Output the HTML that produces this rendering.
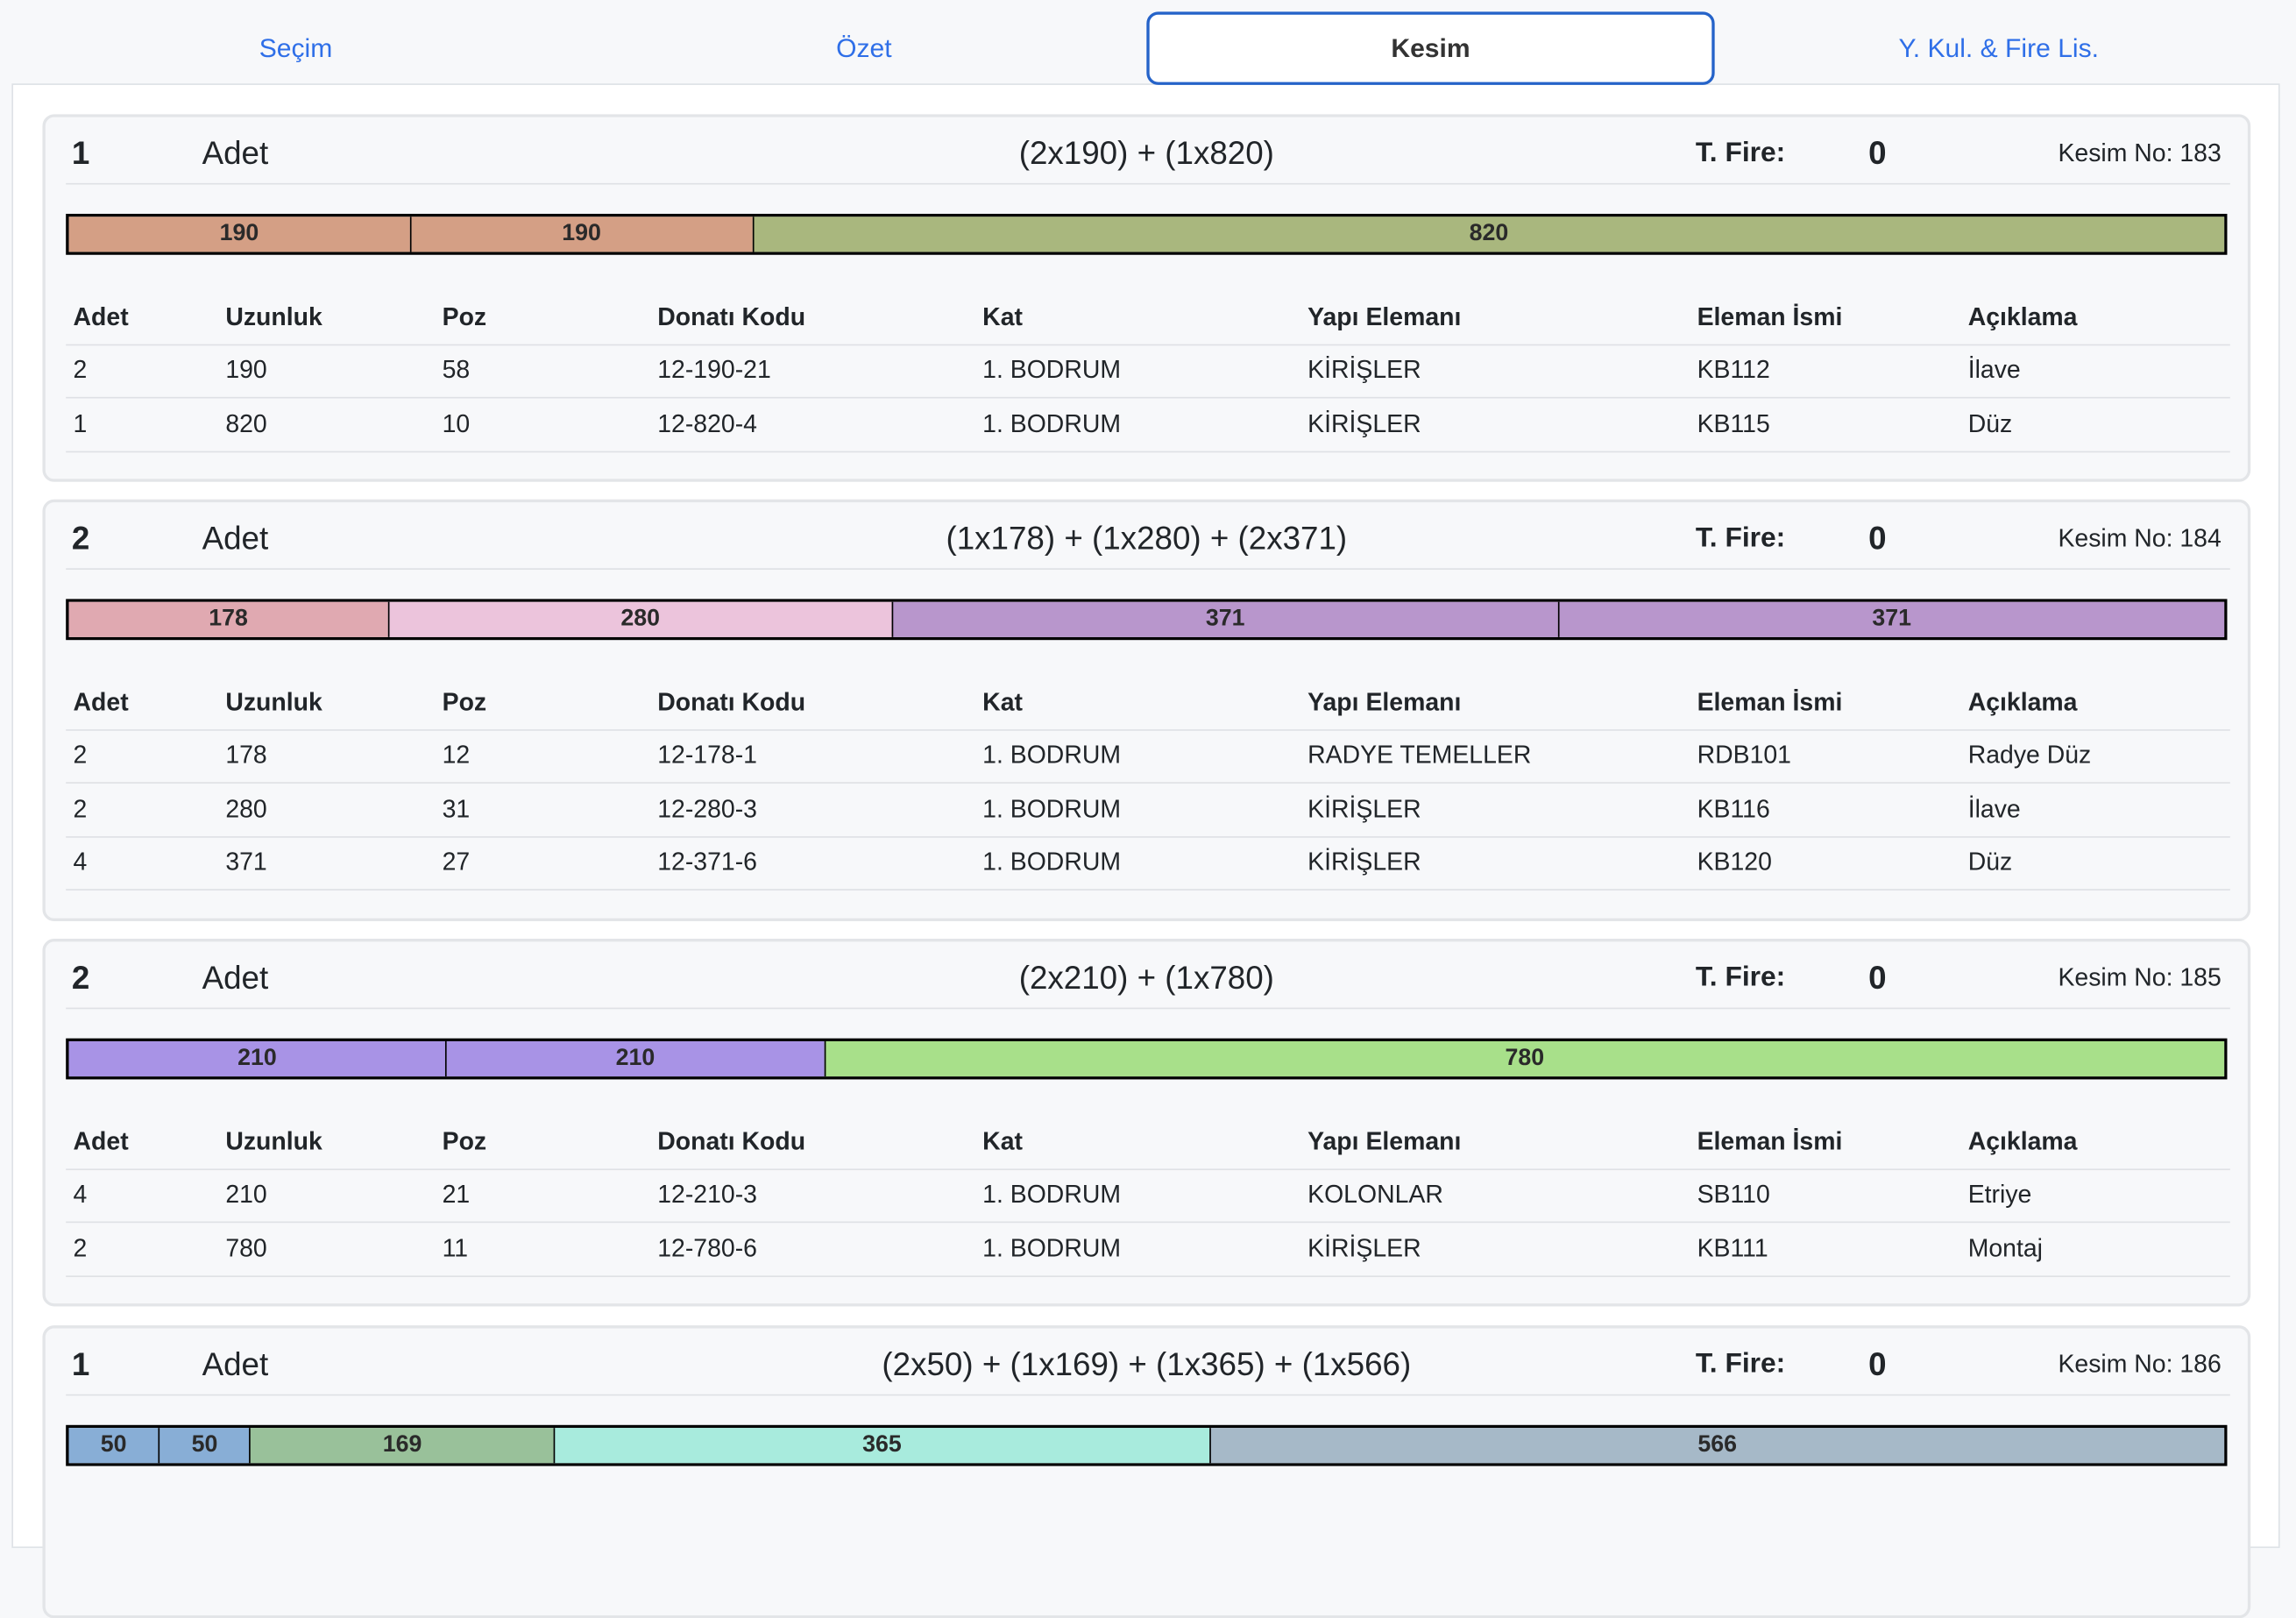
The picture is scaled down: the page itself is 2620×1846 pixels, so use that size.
<!DOCTYPE html>
<html><head><meta charset="utf-8">
<style>
html,body{margin:0;padding:0;background:#f7f8fa;width:2620px;height:1702px;overflow:hidden}
#w{position:absolute;left:0;top:0;width:1568px;height:1019px;transform:scale(1.67092);transform-origin:0 0;font-family:"Liberation Sans",Arial,sans-serif;color:#212529}
.tab{position:absolute;top:8px;height:50px;width:388px;text-align:center;line-height:50px;font-size:18px;color:#2f6fe8}
.tab.act{background:#fff;border:2px solid #2563c9;border-radius:8px;color:#333;font-weight:bold;box-sizing:border-box;line-height:46px}
#panel{position:absolute;left:8px;top:57px;width:1549px;height:1000px;background:#fff;border:1px solid #dee2e6;box-sizing:border-box}
.card{position:absolute;left:29px;width:1508px;background:#f7f8fa;border:2px solid #e3e5e8;border-radius:8px;box-sizing:border-box}
.h{position:absolute;top:12px;font-size:22px;line-height:26px}
.b{font-weight:bold}
.hl{position:absolute;left:14px;width:1478px;top:45px;border-top:1px solid #dfe1e5}
.bar{position:absolute;left:14px;top:66px;width:1476px;height:28px;border:2px solid #000;box-sizing:border-box;display:flex}
.bar div{border-left:1px solid #000;text-align:center;font-weight:bold;font-size:16px;line-height:24px;color:#2a2a2a;overflow:hidden}
.bar div:first-child{border-left:none}
.row{position:absolute;left:14px;width:1478px;height:36px;font-size:17px;line-height:36px;border-bottom:1px solid #dfe1e5}
.row span{position:absolute;top:0}
.th{font-weight:bold}
</style></head><body><div id="w">
<div class="tab" style="left:8px">Seçim</div>
<div class="tab" style="left:396px">Özet</div>
<div id="panel"></div>
<div class="tab act" style="left:783px">Kesim</div>
<div class="tab" style="left:1171px">Y. Kul. &amp; Fire Lis.</div>

<!-- card 1 -->
<div class="card" style="top:78px;height:251px">
 <div class="h b" style="left:18px">1</div>
 <div class="h" style="left:107px">Adet</div>
 <div class="h" style="left:0;width:1504px;text-align:center">(2x190) + (1x820)</div>
 <div class="h b" style="left:1127px;font-size:19px">T. Fire:</div>
 <div class="h b" style="left:1245px">0</div>
 <div class="h" style="right:18px;font-size:17px">Kesim No: 183</div>
 <div class="hl"></div>
 <div class="bar"><div style="flex:190;background:#d49f85">190</div><div style="flex:190;background:#d49f85">190</div><div style="flex:820;background:#a9b77e">820</div></div>
 <div class="row th" style="top:119px"><span style="left:5px">Adet</span><span style="left:109px">Uzunluk</span><span style="left:257px">Poz</span><span style="left:404px">Donatı Kodu</span><span style="left:626px">Kat</span><span style="left:848px">Yapı Elemanı</span><span style="left:1114px">Eleman İsmi</span><span style="left:1299px">Açıklama</span></div>
 <div class="row" style="top:155px"><span style="left:5px">2</span><span style="left:109px">190</span><span style="left:257px">58</span><span style="left:404px">12-190-21</span><span style="left:626px">1. BODRUM</span><span style="left:848px">KİRİŞLER</span><span style="left:1114px">KB112</span><span style="left:1299px">İlave</span></div>
 <div class="row" style="top:192px"><span style="left:5px">1</span><span style="left:109px">820</span><span style="left:257px">10</span><span style="left:404px">12-820-4</span><span style="left:626px">1. BODRUM</span><span style="left:848px">KİRİŞLER</span><span style="left:1114px">KB115</span><span style="left:1299px">Düz</span></div>
</div>

<!-- card 2 -->
<div class="card" style="top:341px;height:288px">
 <div class="h b" style="left:18px">2</div>
 <div class="h" style="left:107px">Adet</div>
 <div class="h" style="left:0;width:1504px;text-align:center">(1x178) + (1x280) + (2x371)</div>
 <div class="h b" style="left:1127px;font-size:19px">T. Fire:</div>
 <div class="h b" style="left:1245px">0</div>
 <div class="h" style="right:18px;font-size:17px">Kesim No: 184</div>
 <div class="hl"></div>
 <div class="bar"><div style="flex:178;background:#e0a9b1">178</div><div style="flex:280;background:#ecc4dc">280</div><div style="flex:371;background:#b896cc">371</div><div style="flex:371;background:#b896cc">371</div></div>
 <div class="row th" style="top:119px"><span style="left:5px">Adet</span><span style="left:109px">Uzunluk</span><span style="left:257px">Poz</span><span style="left:404px">Donatı Kodu</span><span style="left:626px">Kat</span><span style="left:848px">Yapı Elemanı</span><span style="left:1114px">Eleman İsmi</span><span style="left:1299px">Açıklama</span></div>
 <div class="row" style="top:155px"><span style="left:5px">2</span><span style="left:109px">178</span><span style="left:257px">12</span><span style="left:404px">12-178-1</span><span style="left:626px">1. BODRUM</span><span style="left:848px">RADYE TEMELLER</span><span style="left:1114px">RDB101</span><span style="left:1299px">Radye Düz</span></div>
 <div class="row" style="top:192px"><span style="left:5px">2</span><span style="left:109px">280</span><span style="left:257px">31</span><span style="left:404px">12-280-3</span><span style="left:626px">1. BODRUM</span><span style="left:848px">KİRİŞLER</span><span style="left:1114px">KB116</span><span style="left:1299px">İlave</span></div>
 <div class="row" style="top:228px"><span style="left:5px">4</span><span style="left:109px">371</span><span style="left:257px">27</span><span style="left:404px">12-371-6</span><span style="left:626px">1. BODRUM</span><span style="left:848px">KİRİŞLER</span><span style="left:1114px">KB120</span><span style="left:1299px">Düz</span></div>
</div>

<!-- card 3 -->
<div class="card" style="top:641px;height:251px">
 <div class="h b" style="left:18px">2</div>
 <div class="h" style="left:107px">Adet</div>
 <div class="h" style="left:0;width:1504px;text-align:center">(2x210) + (1x780)</div>
 <div class="h b" style="left:1127px;font-size:19px">T. Fire:</div>
 <div class="h b" style="left:1245px">0</div>
 <div class="h" style="right:18px;font-size:17px">Kesim No: 185</div>
 <div class="hl"></div>
 <div class="bar"><div style="flex:210;background:#a893e6">210</div><div style="flex:210;background:#a893e6">210</div><div style="flex:780;background:#a8e08a">780</div></div>
 <div class="row th" style="top:119px"><span style="left:5px">Adet</span><span style="left:109px">Uzunluk</span><span style="left:257px">Poz</span><span style="left:404px">Donatı Kodu</span><span style="left:626px">Kat</span><span style="left:848px">Yapı Elemanı</span><span style="left:1114px">Eleman İsmi</span><span style="left:1299px">Açıklama</span></div>
 <div class="row" style="top:155px"><span style="left:5px">4</span><span style="left:109px">210</span><span style="left:257px">21</span><span style="left:404px">12-210-3</span><span style="left:626px">1. BODRUM</span><span style="left:848px">KOLONLAR</span><span style="left:1114px">SB110</span><span style="left:1299px">Etriye</span></div>
 <div class="row" style="top:192px"><span style="left:5px">2</span><span style="left:109px">780</span><span style="left:257px">11</span><span style="left:404px">12-780-6</span><span style="left:626px">1. BODRUM</span><span style="left:848px">KİRİŞLER</span><span style="left:1114px">KB111</span><span style="left:1299px">Montaj</span></div>
</div>

<!-- card 4 -->
<div class="card" style="top:905px;height:200px">
 <div class="h b" style="left:18px">1</div>
 <div class="h" style="left:107px">Adet</div>
 <div class="h" style="left:0;width:1504px;text-align:center">(2x50) + (1x169) + (1x365) + (1x566)</div>
 <div class="h b" style="left:1127px;font-size:19px">T. Fire:</div>
 <div class="h b" style="left:1245px">0</div>
 <div class="h" style="right:18px;font-size:17px">Kesim No: 186</div>
 <div class="hl"></div>
 <div class="bar"><div style="flex:50;background:#88aed6">50</div><div style="flex:50;background:#88aed6">50</div><div style="flex:169;background:#99c19a">169</div><div style="flex:365;background:#a8ebdd">365</div><div style="flex:566;background:#a6b9c8">566</div></div>
</div>
</div></body></html>
